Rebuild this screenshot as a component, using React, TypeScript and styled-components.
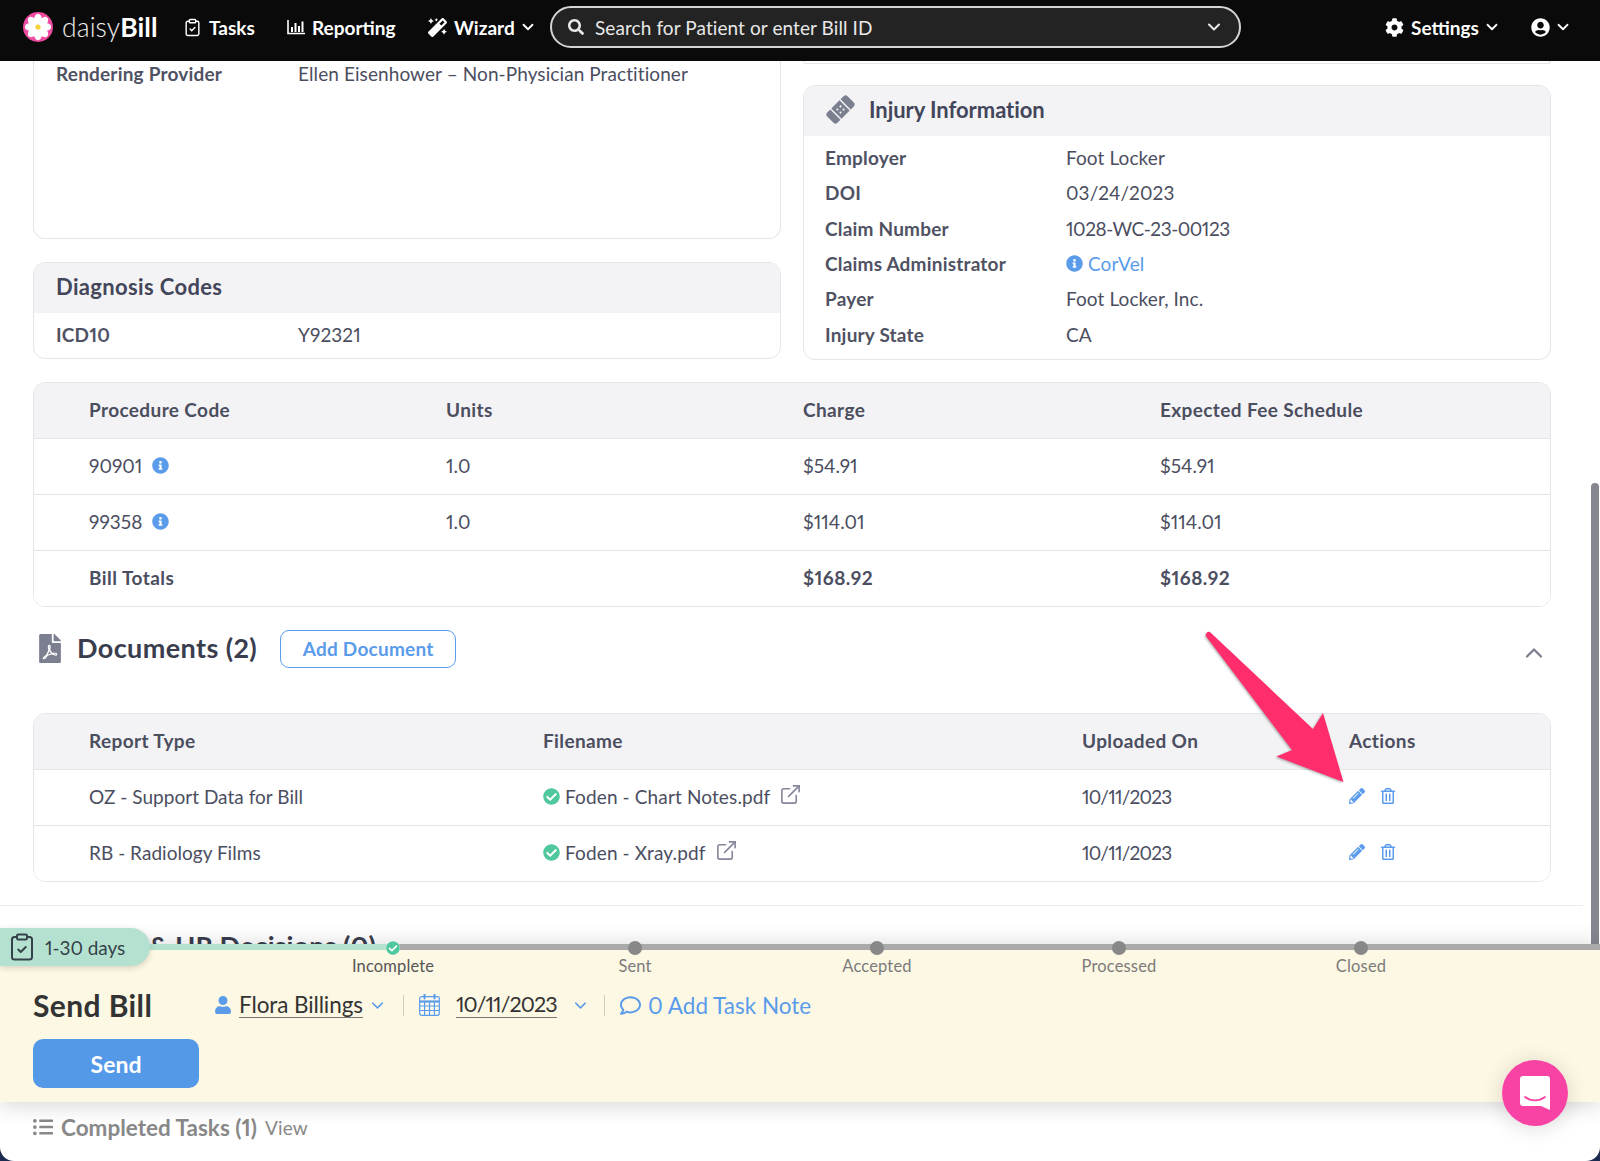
import React from 'react';
import styled, { createGlobalStyle } from 'styled-components';
import { FaBandAid, FaCheckCircle, FaCog, FaFilePdf, FaInfoCircle, FaListUl, FaMagic, FaPencilAlt, FaRegComment, FaRegTrashAlt, FaSearch, FaUser, FaUserCircle } from 'react-icons/fa';
import { ChevronDown, ChevronUp, ClipboardCheck, ExternalLink } from 'lucide-react';

const FONT = `Lato, "Open Sans", "Liberation Sans", sans-serif`;
const BLUE = '#5a9bea';
const INK = '#4b4e5f';

const Global = createGlobalStyle`
  html, body { margin: 0; padding: 0; background: #1b2a4e; }
  body { font-family: ${FONT}; color: ${INK}; font-variant-numeric: proportional-nums; }
  * { box-sizing: border-box; }
`;

const Page = styled.div`
  position: relative;
  width: 1600px;
  height: 1161px;
  overflow: hidden;
  display: flex;
  flex-direction: column;
  background: #fff;
  border-radius: 0 0 14px 14px;
`;

/* ---------- navbar ---------- */
const Nav = styled.header`
  height: 61px;
  flex: none;
  background: #0a0a0a;
  display: flex;
  align-items: center;
  color: #fff;
  padding: 0 0 7px 23px;
  position: relative;
  z-index: 3;
`;
const Brand = styled.div`
  display: flex;
  align-items: center;
  gap: 9px;
  width: 160px;
  flex: none;
`;
const BrandName = styled.span`
  font-size: 26.5px;
  font-weight: 300;
  color: #eee;
  letter-spacing: 0.1px;
  b { font-weight: 700; color: #fff; }
`;
const NavItem = styled.div<{ $w: number }>`
  width: ${p => p.$w}px;
  flex: none;
  display: flex;
  align-items: center;
  gap: 7px;
  font-size: 19px;
  font-weight: 700;
  white-space: nowrap;
`;
const NavChevron = styled(ChevronDown)`
  flex: none;
  margin-left: -3px;
`;
const SearchBox = styled.div`
  width: 691px;
  height: 42px;
  flex: none;
  border: 2px solid #d4d4d4;
  border-radius: 21px;
  background: #232323;
  display: flex;
  align-items: center;
  padding: 0 15px 0 16px;
  gap: 11px;
  font-size: 19px;
  color: #e8e8e8;
  margin-right: 144px;
`;
const SearchText = styled.span`
  flex: 1;
  letter-spacing: 0.09px;
`;

/* ---------- main ---------- */
const Main = styled.main`
  flex: 1;
  min-height: 0;
  overflow: hidden;
  padding: 0 49px 0 33px;
`;
const TopGrid = styled.div`
  display: grid;
  grid-template-columns: 748px 748px;
  gap: 22px;
  margin-bottom: 22px;
`;
const Column = styled.div`
  display: flex;
  flex-direction: column;
`;
const Card = styled.section`
  border: 1px solid #e6e6ea;
  border-radius: 12px;
  overflow: hidden;
  background: #fff;
`;
const ClippedCard = styled(Card)`
  height: 178px;
  border-top: none;
  border-radius: 0 0 12px 12px;
  margin-bottom: 23px;
  padding: 0 22px;
`;
const ClippedStub = styled.div`
  height: 3px;
  border: 1px solid #e6e6ea;
  border-top: none;
  border-radius: 0 0 10px 10px;
  margin-bottom: 21px;
`;
const CardHead = styled.div<{ $ls: number }>`
  height: 50px;
  background: #f3f3f5;
  display: flex;
  align-items: center;
  padding: 0 0 4px 22px;
  gap: 14px;
  font-size: 22px;
  font-weight: 700;
  color: #43465a;
  letter-spacing: ${p => p.$ls}px;
  svg { color: #7c7f90; }
`;
const InfoRow = styled.div<{ $h?: number; $label?: number }>`
  display: grid;
  grid-template-columns: ${p => p.$label ?? 241}px 1fr;
  align-items: center;
  height: ${p => p.$h ?? 35.3}px;
  font-size: 19px;
  letter-spacing: 0.09px;
`;
const Label = styled.div`
  font-weight: 700;
  color: #4f5263;
  letter-spacing: 0.2px;
`;
const Tight = styled.span<{ $ls: number }>`
  letter-spacing: ${p => p.$ls}px;
`;
const Rows = styled.div`
  padding: 4px 22px 7px 21px;
`;
const DiagnosisRows = styled(Rows)`
  padding-left: 22px;
`;
const CorVel = styled.span`
  color: ${BLUE};
  display: inline-flex;
  align-items: center;
  gap: 5px;
`;
const Table = styled.div`
  border: 1px solid #e6e6ea;
  border-radius: 12px;
  overflow: hidden;
`;
const TableRow = styled.div<{ $cols: string; $head?: boolean; $bold?: boolean }>`
  display: grid;
  grid-template-columns: ${p => p.$cols};
  padding: 0 0 2px 55px;
  height: 56px;
  align-items: center;
  font-size: 19px;
  letter-spacing: ${p => (p.$head ? '0.38px' : p.$bold ? '0.45px' : '0.03px')};
  background: ${p => (p.$head ? '#f3f3f5' : '#fff')};
  font-weight: ${p => (p.$head || p.$bold ? 700 : 400)};
  border-bottom: 1px solid #e6e6ea;
  &:last-child { border-bottom: none; height: 55px; }
`;
const Cell = styled.div`
  display: flex;
  align-items: center;
  gap: 10px;
  white-space: nowrap;
  svg { flex: none; }
`;
const FileCell = styled(Cell)`
  gap: 5px;
  letter-spacing: 0.13px;
`;
const SectionHead = styled.div`
  display: flex;
  align-items: center;
  height: 38px;
  margin: 23px 0 45px;
`;
const SectionTitle = styled.h2`
  margin: 0 23px 3px 16px;
  font-size: 27px;
  font-weight: 700;
  color: #3a3d4e;
  letter-spacing: 0.4px;
`;
const PdfIcon = styled(FaFilePdf)`
  margin-left: 6px;
  color: #7c7f90;
  font-size: 29px;
  width: 22px;
`;
const OutlineButton = styled.button`
  width: 176px;
  height: 38px;
  border: 1px solid ${BLUE};
  border-radius: 9px;
  background: #fff;
  color: ${BLUE};
  font: 700 19px ${FONT};
  letter-spacing: 0.25px;
`;
const Collapse = styled.div`
  margin-left: auto;
  margin-right: 3px;
  color: #7c7f90;
  display: flex;
  padding-top: 8px;
`;
const Divider = styled.hr`
  margin: 23px -32px 0 -33px;
  border: none;
  border-top: 1px solid #ececef;
`;
const NextTitle = styled.h2`
  margin: 23px 0 0 116px;
  font-size: 27px;
  line-height: 34px;
  font-weight: 700;
  color: #3a3d4e;
  letter-spacing: 0.1px;
  white-space: nowrap;
`;
const Actions = styled(Cell)`
  gap: 15px;
  color: ${BLUE};
`;
const Check = styled(FaCheckCircle)`
  color: #4fc89d;
`;
const Ext = styled(ExternalLink)`
  color: #85879a;
  margin-left: 4px;
  position: relative;
  top: -2px;
`;
const Info = styled(FaInfoCircle)`
  color: ${BLUE};
`;

/* ---------- task panel ---------- */
const Panel = styled.section`
  position: relative;
  z-index: 2;
  flex: none;
  height: 158px;
  background: #fdf8e4;
  box-shadow: 0 2px 22px rgba(0, 0, 0, 0.18);
`;
const Track = styled.div`
  height: 6px;
  background: #aaaaaa;
  position: relative;
`;
const TrackDone = styled.div`
  position: absolute;
  left: 0;
  top: 0;
  bottom: 0;
  width: 393px;
  background: #b5e2d0;
`;
const Badge = styled.div`
  position: absolute;
  left: 0;
  top: -16px;
  width: 150px;
  height: 38px;
  background: #b5e2d0;
  border-radius: 0 19px 19px 0;
  box-shadow: 0 2px 6px rgba(0, 0, 0, 0.15);
  display: flex;
  align-items: center;
  padding-left: 7px;
  gap: 8px;
  font-size: 19px;
  color: #35424a;
  letter-spacing: -0.05px;
`;
const Steps = styled.div`
  display: flex;
  padding-left: 272px;
  margin-top: -9px;
  position: relative;
`;
const Step = styled.div`
  width: 242px;
  display: flex;
  flex-direction: column;
  align-items: center;
`;
const Dot = styled.span<{ $done?: boolean }>`
  width: 14px;
  height: 14px;
  border-radius: 50%;
  background: ${p => (p.$done ? '#fff' : '#888')};
  display: flex;
  align-items: center;
  justify-content: center;
`;
const StepLabel = styled.span<{ $on?: boolean }>`
  margin-top: 1px;
  font-size: 16.5px;
  line-height: 20px;
  color: ${p => (p.$on ? '#555' : '#7b7b7b')};
  letter-spacing: 0.15px;
`;
const TaskRow = styled.div`
  display: flex;
  align-items: center;
  height: 36px;
  margin-top: 11px;
  padding-left: 33px;
  font-size: 22.5px;
`;
const TaskTitle = styled.h3`
  margin: 0;
  width: 181px;
  font-size: 30px;
  font-weight: 700;
  color: #333;
  letter-spacing: 0.4px;
`;
const Picker = styled.div<{ $w: number; $gap: number }>`
  width: ${p => p.$w}px;
  display: flex;
  align-items: center;
  color: ${BLUE};
  gap: ${p => p.$gap}px;
  flex: none;
`;
const PickText = styled.span`
  color: #333;
  border-bottom: 1px solid #777;
  line-height: 25px;
  letter-spacing: -0.1px;
`;
const DateText = styled(PickText)`
  font-size: 21.5px;
  letter-spacing: -0.9px;
`;
const PickChevron = styled(ChevronDown)`
  margin-left: -2px;
`;
const Sep = styled.span`
  width: 1px;
  height: 21px;
  background: #cfcdbf;
  margin-right: 15px;
  flex: none;
`;
const NoteLink = styled.span`
  display: flex;
  align-items: center;
  gap: 7px;
  color: ${BLUE};
`;
const SendButton = styled.button`
  display: block;
  margin: 16px 0 0 33px;
  width: 166px;
  height: 49px;
  border: none;
  border-radius: 10px;
  background: #5498e8;
  color: #fff;
  font: 700 23px ${FONT};
`;
const Footer = styled.footer`
  flex: none;
  height: 59px;
  display: flex;
  align-items: center;
  padding: 0 0 9px 33px;
  color: #888;
  gap: 8px;
  font-size: 22.5px;
  font-weight: 700;
`;
const ViewLink = styled.span`
  font-size: 19px;
  font-weight: 400;
  letter-spacing: 0.2px;
`;

/* ---------- overlays ---------- */
const ScrollThumb = styled.div`
  position: absolute;
  right: 1px;
  top: 483px;
  width: 8px;
  height: 462px;
  border-radius: 4px 4px 0 0;
  background: #85868f;
  z-index: 1;
`;
const ArrowSvg = styled.svg`
  position: absolute;
  left: 0;
  top: 0;
  z-index: 4;
  pointer-events: none;
  filter: drop-shadow(-1px 1px 1px rgba(0, 0, 0, 0.3));
`;
const ChatBubble = styled.div`
  position: absolute;
  left: 1502px;
  top: 1060px;
  width: 66px;
  height: 66px;
  border-radius: 50%;
  background: #f843a5;
  box-shadow: 0 2px 22px rgba(0, 0, 0, 0.14);
  display: flex;
  align-items: center;
  justify-content: center;
  z-index: 5;
`;

const Logo = () => (
  <svg width="30" height="30" viewBox="-15 -15 30 30">
    <circle r="15" fill="#ee4a9f" />
    {[0, 45, 90, 135, 180, 225, 270, 315].map(a => (
      <ellipse key={a} cx="0" cy="-7.6" rx="3.9" ry="5.6" fill="#fff" transform={`rotate(${a})`} />
    ))}
    <circle r="2.6" fill="#f7d33c" />
  </svg>
);
const ReportIcon = () => (
  <svg width="18" height="16" viewBox="0 0 18 16" fill="none" stroke="#fff">
    <path d="M1 1v13.5h17" strokeWidth="1.6" />
    <path d="M5 13V8M8.5 13V4M12 13V7M15.5 13V2.5" strokeWidth="2" />
  </svg>
);
const CalendarIcon = () => (
  <svg width="21" height="22" viewBox="0 0 21 22" fill="none" stroke={BLUE} strokeWidth="1.2">
    <rect x="0.7" y="2.7" width="19.6" height="18.6" rx="2" fill="#fff" fillOpacity="0.35" />
    <path d="M0.7 7.5h19.6" strokeWidth="2.2" />
    <path d="M0.7 12h19.6M0.7 16.5h19.6M5.6 8v13M10.5 8v13M15.4 8v13" />
    <path d="M5.5 0.5v4M15.5 0.5v4" strokeWidth="2" strokeLinecap="round" />
  </svg>
);
const ChatIcon = () => (
  <svg width="30" height="34" viewBox="0 0 30 34">
    <path d="M3 0h24a3 3 0 0 1 3 3v31l-9-4H3a3 3 0 0 1-3-3V3a3 3 0 0 1 3-3z" fill="#fff" />
    <path d="M5 21c6 4.5 14 4.5 20 0" stroke="#f843a5" strokeWidth="1.8" fill="none" strokeLinecap="round" />
  </svg>
);

const PROC_COLS = '357px 357px 357px 1fr';
const DOC_COLS = '454px 539px 267px 1fr';

const docs = [
  ['OZ - Support Data for Bill', 'Foden - Chart Notes.pdf'],
  ['RB - Radiology Films', 'Foden - Xray.pdf'],
];
const injury: [string, React.ReactNode][] = [
  ['Employer', 'Foot Locker'],
  ['DOI', '03/24/2023'],
  ['Claim Number', <Tight key="n" $ls={-0.45}>1028-WC-23-00123</Tight>],
  ['Claims Administrator', <CorVel key="c"><Info size={17} />CorVel</CorVel>],
  ['Payer', 'Foot Locker, Inc.'],
  ['Injury State', 'CA'],
];

export default function App() {
  return (
    <Page>
      <Global />
      <Nav>
        <Brand><Logo /><BrandName>daisy<b>Bill</b></BrandName></Brand>
        <NavItem $w={104}><ClipboardCheck size={19} strokeWidth={1.8} />Tasks</NavItem>
        <NavItem $w={141}><ReportIcon />Reporting</NavItem>
        <NavItem $w={122}><FaMagic size={19} />Wizard<NavChevron size={18} strokeWidth={2.4} /></NavItem>
        <SearchBox>
          <FaSearch size={16} />
          <SearchText>Search for Patient or enter Bill ID</SearchText>
          <ChevronDown size={20} strokeWidth={2.4} />
        </SearchBox>
        <NavItem $w={146}><FaCog size={19} />Settings<NavChevron size={18} strokeWidth={2.4} /></NavItem>
        <NavItem $w={50}><FaUserCircle size={19} /><NavChevron size={18} strokeWidth={2.4} /></NavItem>
      </Nav>

      <Main>
        <TopGrid>
          <Column>
            <ClippedCard>
              <InfoRow $h={25} $label={242}>
                <Label>Rendering Provider</Label>
                <div>Ellen Eisenhower – Non-Physician Practitioner</div>
              </InfoRow>
            </ClippedCard>
            <Card>
              <CardHead $ls={0.35}>Diagnosis Codes</CardHead>
              <DiagnosisRows>
                <InfoRow $h={34} $label={242}><Label>ICD10</Label><div>Y92321</div></InfoRow>
              </DiagnosisRows>
            </Card>
          </Column>
          <Column>
            <ClippedStub />
            <Card>
              <CardHead $ls={-0.05}><FaBandAid size={29} style={{ transform: 'rotate(-45deg)' }} />Injury Information</CardHead>
              <Rows>
                {injury.map(([k, v]) => (
                  <InfoRow key={k}><Label>{k}</Label><div>{v}</div></InfoRow>
                ))}
              </Rows>
            </Card>
          </Column>
        </TopGrid>

        <Table>
          <TableRow $cols={PROC_COLS} $head>
            <Cell>Procedure Code</Cell><Cell>Units</Cell><Cell>Charge</Cell><Cell>Expected Fee Schedule</Cell>
          </TableRow>
          <TableRow $cols={PROC_COLS}>
            <Cell>90901 <Info size={17} /></Cell><Cell>1.0</Cell><Cell>$54.91</Cell><Cell>$54.91</Cell>
          </TableRow>
          <TableRow $cols={PROC_COLS}>
            <Cell>99358 <Info size={17} /></Cell><Cell>1.0</Cell><Cell>$114.01</Cell><Cell>$114.01</Cell>
          </TableRow>
          <TableRow $cols={PROC_COLS} $bold>
            <Cell>Bill Totals</Cell><Cell /><Cell>$168.92</Cell><Cell>$168.92</Cell>
          </TableRow>
        </Table>

        <SectionHead>
          <PdfIcon />
          <SectionTitle>Documents (2)</SectionTitle>
          <OutlineButton>Add Document</OutlineButton>
          <Collapse><ChevronUp size={28} strokeWidth={2} /></Collapse>
        </SectionHead>

        <Table>
          <TableRow $cols={DOC_COLS} $head>
            <Cell>Report Type</Cell><Cell>Filename</Cell><Cell>Uploaded On</Cell><Cell>Actions</Cell>
          </TableRow>
          {docs.map(([type, file]) => (
            <TableRow key={file} $cols={DOC_COLS}>
              <Cell>{type}</Cell>
              <FileCell><Check size={17} />{file}<Ext size={23} strokeWidth={1.7} /></FileCell>
              <Cell><Tight $ls={-0.75}>10/11/2023</Tight></Cell>
              <Actions><FaPencilAlt size={16} /><FaRegTrashAlt size={16} /></Actions>
            </TableRow>
          ))}
        </Table>

        <Divider />
        <NextTitle>&amp; UR Decisions (0)</NextTitle>
      </Main>

      <Panel>
        <Track><TrackDone /></Track>
        <Badge><ClipboardCheck size={30} strokeWidth={1.6} />1-30 days</Badge>
        <Steps>
          <Step>
            <Dot $done><FaCheckCircle size={14} color="#4fc89d" /></Dot>
            <StepLabel $on>Incomplete</StepLabel>
          </Step>
          {['Sent', 'Accepted', 'Processed', 'Closed'].map(s => (
            <Step key={s}><Dot /><StepLabel>{s}</StepLabel></Step>
          ))}
        </Steps>
        <TaskRow>
          <TaskTitle>Send Bill</TaskTitle>
          <Picker $w={189} $gap={7}>
            <FaUser size={18} />
            <PickText>Flora Billings</PickText>
            <PickChevron size={19} strokeWidth={1.8} />
          </Picker>
          <Sep />
          <Picker $w={185} $gap={16}>
            <CalendarIcon />
            <DateText>10/11/2023</DateText>
            <PickChevron size={19} strokeWidth={1.8} />
          </Picker>
          <Sep />
          <NoteLink><FaRegComment size={21} />0 Add Task Note</NoteLink>
        </TaskRow>
        <SendButton>Send</SendButton>
      </Panel>

      <Footer>
        <FaListUl size={20} />
        <span>Completed Tasks (1)</span>
        <ViewLink>View</ViewLink>
      </Footer>

      <ScrollThumb />
      <ArrowSvg width="1600" height="1161" viewBox="0 0 1600 1161">
        <path
          d="M1207 632.5 Q1209 631 1211 633 L1313 729 L1323 713 L1343.5 782 L1276.5 756.6 L1292 750 L1206.5 637 Q1205 634 1207 632.5Z"
          fill="#ff2d6b"
        />
      </ArrowSvg>
      <ChatBubble><ChatIcon /></ChatBubble>
    </Page>
  );
}
